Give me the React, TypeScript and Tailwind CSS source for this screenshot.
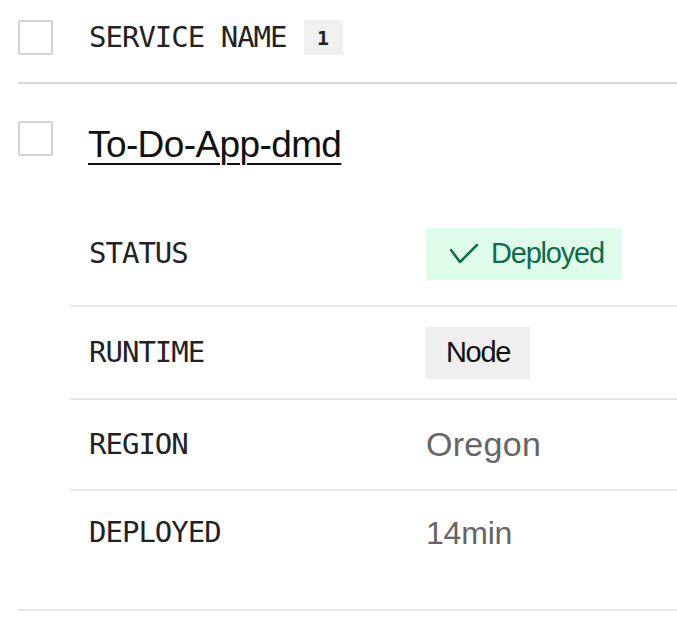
import React from "react";

const mono = { fontFamily: '"DejaVu Sans Mono", "Liberation Mono", monospace' };
const sans = { fontFamily: '"Liberation Sans", Arial, sans-serif' };

function Checkbox() {
  return <div className="h-[35px] w-[35px] shrink-0 rounded-[2px] border-2 border-[#d3d3d3] bg-white" />;
}

function Label({ children }: { children: React.ReactNode }) {
  return (
    <div style={mono} className="w-[355px] shrink-0 pl-[18px] text-[29px] tracking-[-1px] text-[#222]">
      {children}
    </div>
  );
}

export default function App() {
  return (
    <div className="min-h-screen bg-white pl-[18px]">
      {/* Header */}
      <div className="flex h-[35px] items-center mt-[20px]">
        <Checkbox />
        <span style={mono} className="ml-[36px] text-[29px] leading-none tracking-[-1px] text-[#222]">
          SERVICE NAME
        </span>
        <span
          style={mono}
          className="ml-[17px] flex h-[35px] w-[39px] items-center justify-center bg-[#f0f0f0] text-[20px] font-bold text-[#222]"
        >
          1
        </span>
      </div>
      <div className="mt-[27px] border-t-2 border-[#d6d6d6]" />

      {/* Service row */}
      <div className="mt-[37px] flex items-start">
        <Checkbox />
        <a
          href="#"
          style={sans}
          className="ml-[35px] mt-[6px] text-[37px] leading-[36px] tracking-[-0.6px] text-[#111] underline decoration-2 underline-offset-[6px]"
        >
          To-Do-App-dmd
        </a>
      </div>

      {/* Details */}
      <div className="ml-[53px] mt-[38px]">
        <div className="flex h-[106px] items-center border-b-2 border-[#e6e6e6] pt-[2px]">
          <Label>STATUS</Label>
          <span
            style={sans}
            className="flex h-[52px] items-center bg-[#dffbe9] pl-[24px] pr-[18px] text-[29px] tracking-[-1.2px] text-[#0f6b4a]"
          >
            <svg width="28" height="20" viewBox="0 0 28 20" fill="none" className="mr-[13px]">
              <polyline points="1,6 10,18 27,1" stroke="#0f6b4a" strokeWidth="2.5" strokeLinecap="round" strokeLinejoin="round" />
            </svg>
            Deployed
          </span>
        </div>
        <div className="flex h-[93px] items-center border-b-2 border-[#e6e6e6]">
          <Label>RUNTIME</Label>
          <span
            style={sans}
            className="flex h-[52px] w-[104px] items-center justify-center bg-[#efefef] text-[29px] tracking-[-1.3px] text-[#111]"
          >
            Node
          </span>
        </div>
        <div className="flex h-[91px] items-center border-b-2 border-[#e6e6e6]">
          <Label>REGION</Label>
          <span style={sans} className="text-[34px] tracking-[0.3px] text-[#666]">
            Oregon
          </span>
        </div>
        <div className="flex h-[84px] items-center">
          <Label>DEPLOYED</Label>
          <span style={sans} className="text-[32px] tracking-[-0.2px] text-[#666]">
            14min
          </span>
        </div>
      </div>

      <div className="mt-[34px] border-t-2 border-[#e6e6e6]" />
    </div>
  );
}
